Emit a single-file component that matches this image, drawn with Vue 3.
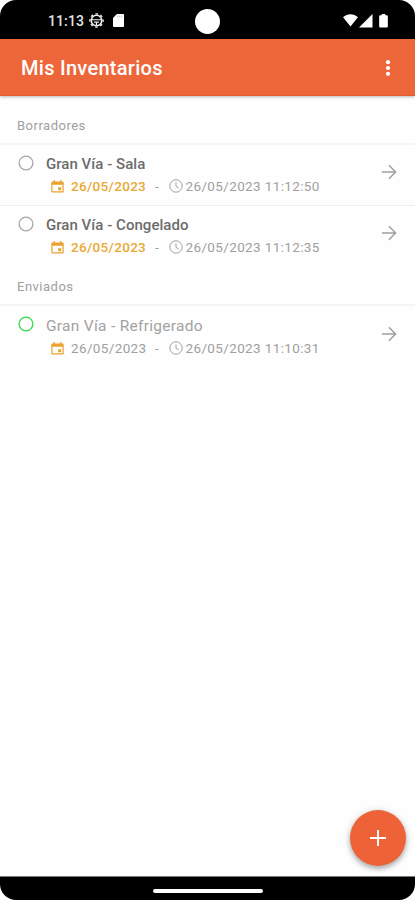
<script setup>
const groups = [
  {
    name: 'Borradores',
    items: [
      { title: 'Gran Vía - Sala', date: '26/05/2023', stamp: '26/05/2023 11:12:50', state: 'draft' },
      { title: 'Gran Vía - Congelado', date: '26/05/2023', stamp: '26/05/2023 11:12:35', state: 'draft' },
    ],
  },
  {
    name: 'Enviados',
    items: [
      { title: 'Gran Vía - Refrigerado', date: '26/05/2023', stamp: '26/05/2023 11:10:31', state: 'sent' },
    ],
  },
]
</script>

<template>
  <div class="phone">
    <header class="status">
      <div class="status-left">
        <span class="clock">11:13</span>
        <svg class="bug" viewBox="0 0 16 16" fill="none" stroke="#eee">
          <circle cx="8" cy="8" r="5.6" stroke-width="1.7" />
          <circle cx="8" cy="8" r="7.1" stroke-width="1.4" stroke-dasharray="2.8 2.776" stroke-dashoffset="1.4" />
          <path d="M3 7.2h10M5.500 9.800h5M8 9.800v3.200" stroke-width="1.3" />
        </svg>
        <svg class="card" viewBox="0 0 12 14"><path d="M4.2 0H11a1 1 0 0 1 1 1v12a1 1 0 0 1-1 1H1a1 1 0 0 1-1-1V4.2z" fill="#fff" /><path d="M4.8 1.6v2M7 1.6v2M9.200 1.6v2" stroke="#aaa" stroke-width=".8" /></svg>
      </div>
      <span class="camera"></span>
      <div class="status-right">
        <svg class="wifi" viewBox="0 0 16 14"><path d="M0 3.6C4.4-.8 11.6-.8 16 3.6L8 13.5z" fill="#fff" /></svg>
        <svg class="signal" viewBox="0 0 14 14"><path d="M14 0v14H0z" fill="#fff" /></svg>
        <svg class="battery" viewBox="0 0 9 14"><path d="M2.6 0h3.8v1.3H8a1 1 0 0 1 1 1V13a1 1 0 0 1-1 1H1a1 1 0 0 1-1-1V2.300a1 1 0 0 1 1-1h1.600z" fill="#fff" /></svg>
      </div>
    </header>
    <div class="appbar">
      <h1>Mis Inventarios</h1>
      <svg class="more" viewBox="0 0 6 18" fill="#fff"><circle cx="3" cy="3.200" r="2.100" /><circle cx="3" cy="9" r="2.100" /><circle cx="3" cy="14.800" r="2.100" /></svg>
    </div>
    <main>
      <section v-for="g in groups" :key="g.name">
        <h2>{{ g.name }}</h2>
        <article v-for="item in g.items" :key="item.title" :class="item.state">
          <svg class="ring" viewBox="0 0 16 16"><circle cx="8" cy="8" r="6.900" fill="none" stroke="currentColor" stroke-width="1.300" /></svg>
          <div class="body">
            <h3>{{ item.title }}</h3>
            <div class="meta">
              <svg class="cal" viewBox="0 0 13 13"><path d="M1.300 1.400h10.400a1 1 0 0 1 1 1v9a1 1 0 0 1-1 1H1.300a1 1 0 0 1-1-1v-9a1 1 0 0 1 1-1zM1.500 4.800v6.400h10V4.800z" fill="currentColor" fill-rule="evenodd" /><path d="M2.600 0h1.300v2H2.600zM9.100 0h1.300v2H9.100zM7.200 7.200h3v3h-3z" fill="currentColor" /></svg>
              <span class="date">{{ item.date }}</span>
              <span class="dash">-</span>
              <svg class="time" viewBox="0 0 14 14" fill="none" stroke="currentColor"><circle cx="7" cy="7" r="6.200" /><path d="M7 3.400v4l2.800 1.700" /></svg>
              <span class="stamp">{{ item.stamp }}</span>
            </div>
          </div>
          <svg class="arrow" viewBox="0 0 16 16" fill="none" stroke="currentColor" stroke-width="1.500"><path d="M1 8h13.300M7.900 1.300L14.600 8l-6.700 6.700" /></svg>
        </article>
      </section>
      <button class="fab" aria-label="Añadir"><svg viewBox="0 0 16 16"><path d="M8 0v16M0 8h16" stroke="#fff" stroke-width="1.900" /></svg></button>
    </main>
    <footer><span></span></footer>
  </div>
</template>

<style>
body { background: #fff; }
</style>

<style scoped>
.phone { position: relative; box-sizing: border-box; width: 415px; height: 900px; display: flex; flex-direction: column; overflow: hidden; border-radius: 16px; background: #fefefe; font-family: Roboto, sans-serif; color: #a0a0a0; }
svg { display: block; flex: none; overflow: visible; }
h1, h2, h3 { margin: 0; }
.status { height: 39px; flex: none; background: #000; display: grid; grid-template-columns: 1fr 25px 1fr; align-items: center; }
.status-left { display: flex; align-items: center; padding: 2px 0 0 48px; }
.clock { color: #e4e4e4; font-size: 14px; font-weight: 500; letter-spacing: .1px; line-height: 16px; width: 41px; }
.bug { width: 15px; height: 15px; }
.card { width: 11px; height: 13px; margin-left: 9px; }
.camera { width: 25px; height: 25px; border-radius: 50%; background: #fff; margin-top: 4px; }
.status-right { display: flex; justify-content: flex-end; align-items: center; padding: 2px 27.500px 0 0; }
.wifi { width: 15px; height: 13px; }
.signal { width: 13.500px; height: 13.500px; margin-left: 1px; }
.battery { width: 9px; height: 13.500px; margin-left: 6px; }
.appbar { position: relative; height: 57px; flex: none; box-sizing: border-box; background: #ed663a; border-bottom: 1px solid #e45c2c; box-shadow: 0 1px 3px rgba(0, 0, 0, .28); display: flex; align-items: center; justify-content: space-between; padding: 2px 24px 0 21px; }
h1 { color: #fff; font-size: 20px; font-weight: 500; letter-spacing: .28px; line-height: 24px; }
.more { width: 6px; height: 18px; }
main { flex: 1; position: relative; padding-top: 9px; }
h2 { box-sizing: border-box; height: 40px; padding: 0 17px; border-bottom: 2px solid #f5f5f5; font-size: 13px; font-weight: 400; line-height: 42px; letter-spacing: .5px; color: #a0a0a0; }
article { height: 60px; box-sizing: border-box; display: flex; align-items: flex-start; padding: 0 18px 0 18px; }
article:not(:last-child) { height: 61px; border-bottom: 1px solid #efefef; }
.ring { width: 16px; height: 16px; margin-top: 10px; color: #a6a6a6; }
.sent .ring { color: #35d745; }
.body { flex: 1; padding: 10px 0 0 12px; }
h3 { font-size: 15px; line-height: 18px; font-weight: 500; letter-spacing: .04px; color: #6c6c6c; }
.sent .body { padding-top: 11px; }
.sent h3 { color: #a2a2a2; font-weight: 400; font-size: 15.500px; letter-spacing: .29px; line-height: 18px; }
.meta { display: flex; align-items: center; height: 16px; margin-top: 5px; padding-left: 5px; font-size: 13.500px; letter-spacing: .37px; line-height: 16px; white-space: nowrap; }
.cal { width: 13px; height: 13px; color: #e9a22f; }
.date { width: 84px; margin-left: 7px; }
.draft .date { color: #e9a933; font-weight: 500; letter-spacing: .32px; }
.dash { width: 13.500px; }
.time { width: 14px; height: 14px; }
.stamp { margin-left: 3px; }
.arrow { width: 16px; height: 16px; margin-top: 19px; color: #a0a0a0; }
.sent .arrow { margin-top: 20px; }
.fab { position: absolute; right: 9.500px; bottom: 10px; width: 56px; height: 56px; padding: 0; border: 0; border-radius: 50%; background: #ed6337; display: grid; place-items: center; box-shadow: 0 3px 5px rgba(0, 0, 0, .26), 0 1px 8px rgba(0, 0, 0, .14); }
.fab svg { width: 16px; height: 16px; }
footer { flex: none; height: 24px; box-sizing: border-box; border-top: 1px solid #777; background: #000; display: flex; justify-content: center; align-items: center; padding-top: 4px; }
footer span { width: 110px; height: 4px; border-radius: 2px; background: #fff; }
</style>
